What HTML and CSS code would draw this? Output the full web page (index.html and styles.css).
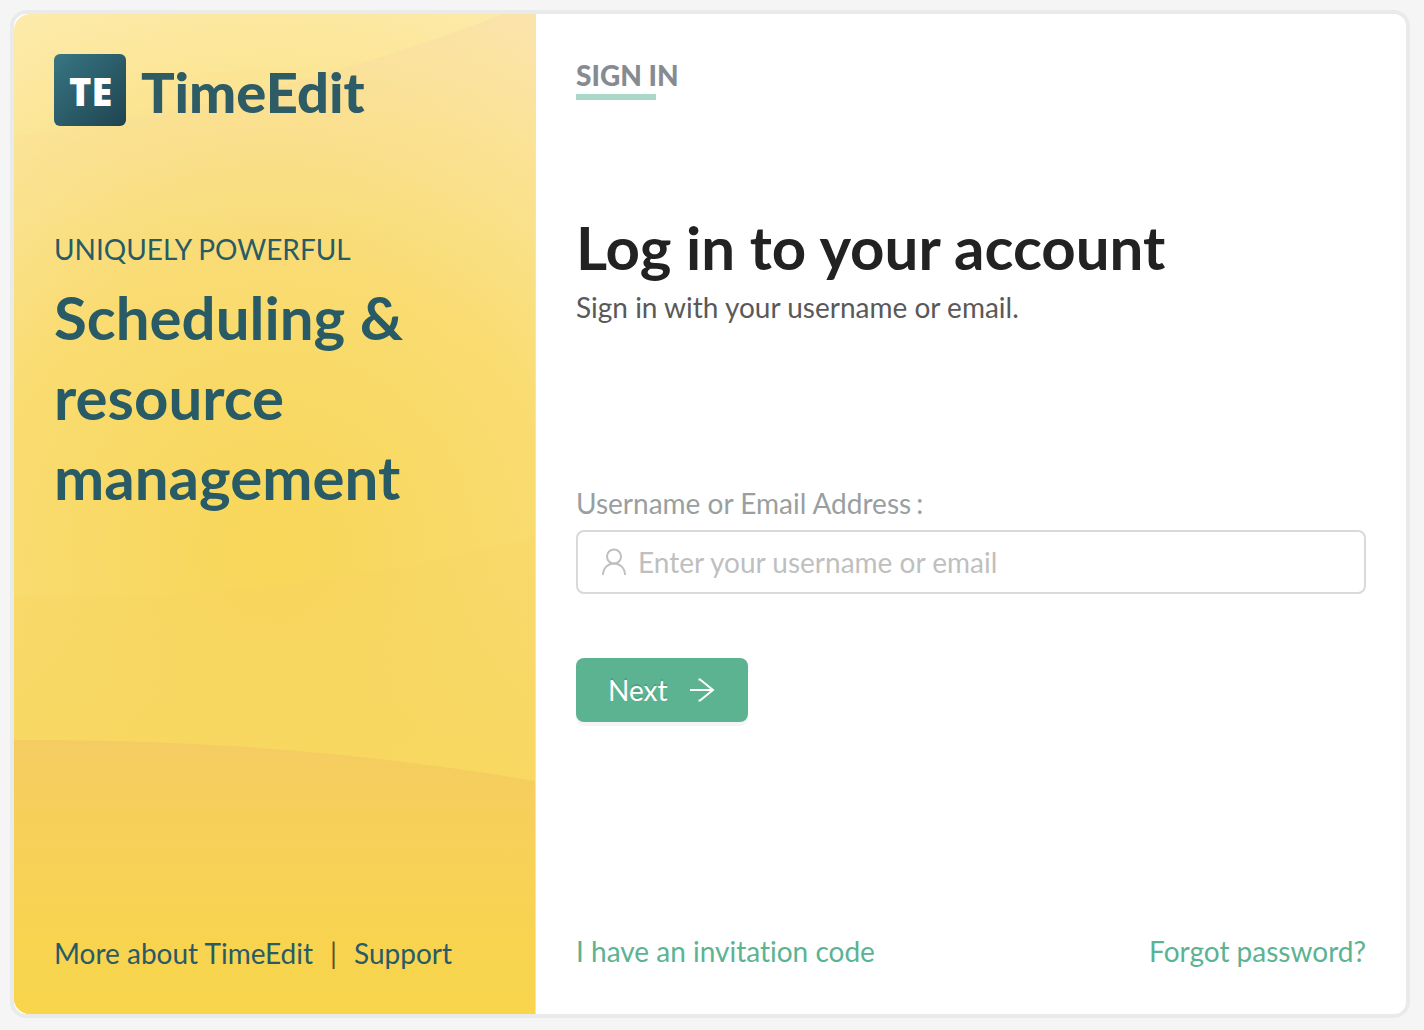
FILE: index.html
```html
<!DOCTYPE html>
<html lang="en">

<head>
    <meta charset="UTF-8">
    <meta name="viewport" content="width=device-width, initial-scale=1.0">
    <link rel="stylesheet" href="styles.css">
    <title>TimeEdit - Sign in</title>
</head>

<body>
    <main class="card">
        <section class="promo">
            <!-- wave background -->
            <svg class="waves" viewBox="0 0 522 1000" preserveAspectRatio="none" aria-hidden="true">
                <defs>
                    <radialGradient id="glow" gradientUnits="userSpaceOnUse" cx="260" cy="540" r="600">
                        <stop offset="0" stop-color="#f8d658" />
                        <stop offset=".5" stop-color="#f9dc72" />
                        <stop offset="1" stop-color="#fdebac" />
                    </radialGradient>
                    <linearGradient id="wave-top" x1="0" y1="0" x2="0" y2="1">
                        <stop offset="0" stop-color="#f6d2ac" stop-opacity=".28" />
                        <stop offset=".35" stop-color="#f8d880" stop-opacity="0" />
                    </linearGradient>
                    <linearGradient id="wave-mid" x1="0" y1="0" x2="0" y2="1">
                        <stop offset="0" stop-color="#f7d260" stop-opacity=".2" />
                        <stop offset=".5" stop-color="#f8d75c" stop-opacity=".8" />
                        <stop offset="1" stop-color="#f8d658" />
                    </linearGradient>
                    <linearGradient id="wave-low" x1="0" y1="0" x2="0" y2="1">
                        <stop offset="0" stop-color="#f5cc62" />
                        <stop offset=".5" stop-color="#f7d255" />
                        <stop offset="1" stop-color="#f8d54b" />
                    </linearGradient>
                </defs>
                <rect width="522" height="1000" fill="url(#glow)" />
                <path d="M0 122Q260 90 490 0H522V1000H0Z" fill="url(#wave-top)" />
                <path d="M0 582Q270 590 522 522V1000H0Z" fill="url(#wave-mid)" />
                <path d="M0 726Q270 724 522 767V1000H0Z" fill="url(#wave-low)" />
            </svg>

            <svg class="logo" viewBox="0 0 308 72" role="img" aria-label="TimeEdit">
                <defs>
                    <linearGradient id="badge" x1="0" y1="0" x2="1" y2="1">
                        <stop offset="0" stop-color="#387683" />
                        <stop offset="1" stop-color="#1f4350" />
                    </linearGradient>
                </defs>
                <rect width="72" height="72" rx="6" fill="url(#badge)" />
                <text class="badge-text" x="15" y="52">TE</text>
                <text class="wordmark" x="87" y="59">TimeEdit</text>
            </svg>

            <div class="pitch">
                <p class="tagline">UNIQUELY POWERFUL</p>
                <h2>Scheduling &amp; resource management</h2>
            </div>

            <nav class="promo-links">
                <a href="#">More about TimeEdit</a>
                <span class="divider">|</span>
                <a href="#">Support</a>
            </nav>
        </section>

        <section class="login">
            <div class="tab">SIGN IN</div>

            <h1>Log in to your account</h1>
            <p class="hint">Sign in with your username or email.</p>

            <form action="#" class="login-form">
                <label for="username">Username or Email Address<span class="colon">:</span></label>
                <div class="input-box">
                    <svg class="user-icon" viewBox="0 0 26 28" aria-hidden="true">
                        <circle cx="12" cy="8.5" r="7" />
                        <path d="M1 27C1 20 6 15.500 12 15.500S23 20 23 27" />
                    </svg>
                    <input type="text" name="username" id="username" placeholder="Enter your username or email">
                </div>
                <button type="submit">
                    <span>Next</span>
                    <svg class="arrow" viewBox="0 0 26 24" aria-hidden="true">
                        <path d="M0 12H23" />
                        <path d="M8.500 1.500H10L23 12L10 22.500H8.500" />
                    </svg>
                </button>
            </form>

            <div class="login-links">
                <a href="#">I have an invitation code</a>
                <a href="#">Forgot password?</a>
            </div>
        </section>
    </main>
</body>

</html>
```
FILE: styles.css
```css
* {
    box-sizing: border-box;
}

body {
    background-color: #f5f5f5;
    font-family: 'Lato', sans-serif;
    font-size: 28px;
    font-variant-ligatures: no-common-ligatures;
    line-height: 42px;
    margin: 10px 14px 12px 10px;
}

h1,
h2,
p {
    margin: 0;
}

a {
    text-decoration: none;
}

.card {
    display: grid;
    grid-template-columns: 3fr 5fr;
    min-height: calc(100vh - 22px);
    background-color: #fff;
    border: 4px solid #e9ebeb;
    border-radius: 16px;
}

/* left side */
.promo {
    position: relative;
    display: flex;
    flex-direction: column;
    padding: 40px;
    border-radius: 16px 0 0 16px;
    border-right: 1px solid #fae69b;
    overflow: hidden;
    color: #285b66;
}

.waves {
    position: absolute;
    top: 0;
    left: 0;
    width: 100%;
    height: 100%;
}

.logo,
.pitch,
.promo-links {
    position: relative;
}

.logo {
    width: 308px;
    height: 72px;
    overflow: visible;
}

.badge-text {
    font-family: 'Open Sans', sans-serif;
    font-weight: 800;
    font-size: 38px;
    fill: #fff;
}

.wordmark {
    font-family: 'Lato', sans-serif;
    font-weight: 900;
    font-size: 56px;
    fill: #2d5c66;
}

.pitch {
    margin-top: 102px;
}

h2 {
    font-size: 60px;
    line-height: 80px;
    font-weight: 700;
    margin-top: 7px;
}

.promo-links {
    display: flex;
    gap: 17px;
    margin-top: auto;
}

.promo-links a {
    color: #285b66;
}

.divider {
    color: #5f5320;
}

/* right side */
.login {
    display: flex;
    flex-direction: column;
    padding: 40px;
}

.tab {
    align-self: flex-start;
    font-weight: 900;
    color: #868b92;
}

.tab::after {
    content: "";
    display: block;
    width: 80px;
    height: 6px;
    margin-top: -2px;
    background-color: #abd8c6;
}

h1 {
    color: #222;
    font-size: 60px;
    line-height: 80px;
    font-weight: 700;
    margin-top: 107px;
}

.hint {
    color: #595959;
    line-height: 40px;
}

.login-form {
    margin-top: 155px;
}

label {
    display: block;
    color: #999fa1;
}

.colon {
    margin-left: 5px;
}

.input-box {
    display: flex;
    align-items: center;
    gap: 10px;
    height: 64px;
    margin-top: 6px;
    padding: 0 24px;
    border: 2px solid #d9d9d9;
    border-radius: 8px;
}

.input-box:focus-within {
    border-color: #5bb392;
}

.user-icon {
    flex: none;
    width: 26px;
    height: 28px;
    fill: none;
    stroke: #bfbfbf;
    stroke-width: 2;
}

input {
    flex: 1;
    min-width: 0;
    padding: 0;
    border: none;
    outline: none;
    background: none;
    color: #333;
    font: inherit;
}

input::placeholder {
    color: #bfbfbf;
}

button {
    display: flex;
    align-items: center;
    gap: 22px;
    height: 64px;
    margin-top: 64px;
    padding: 0 32px;
    border: none;
    border-radius: 8px;
    background-color: #5bb392;
    box-shadow: 0 4px 0 rgba(0, 0, 0, 0.04);
    color: #fff;
    font: inherit;
    text-shadow: 0 -2px 0 rgba(0, 0, 0, 0.12);
    cursor: pointer;
}

.arrow {
    width: 26px;
    height: 24px;
    fill: none;
    stroke: #fff;
    stroke-width: 2;
}

.login-links {
    display: flex;
    justify-content: space-between;
    margin-top: auto;
    margin-bottom: 2px;
}

.login-links a {
    color: #5bb392;
}
```
